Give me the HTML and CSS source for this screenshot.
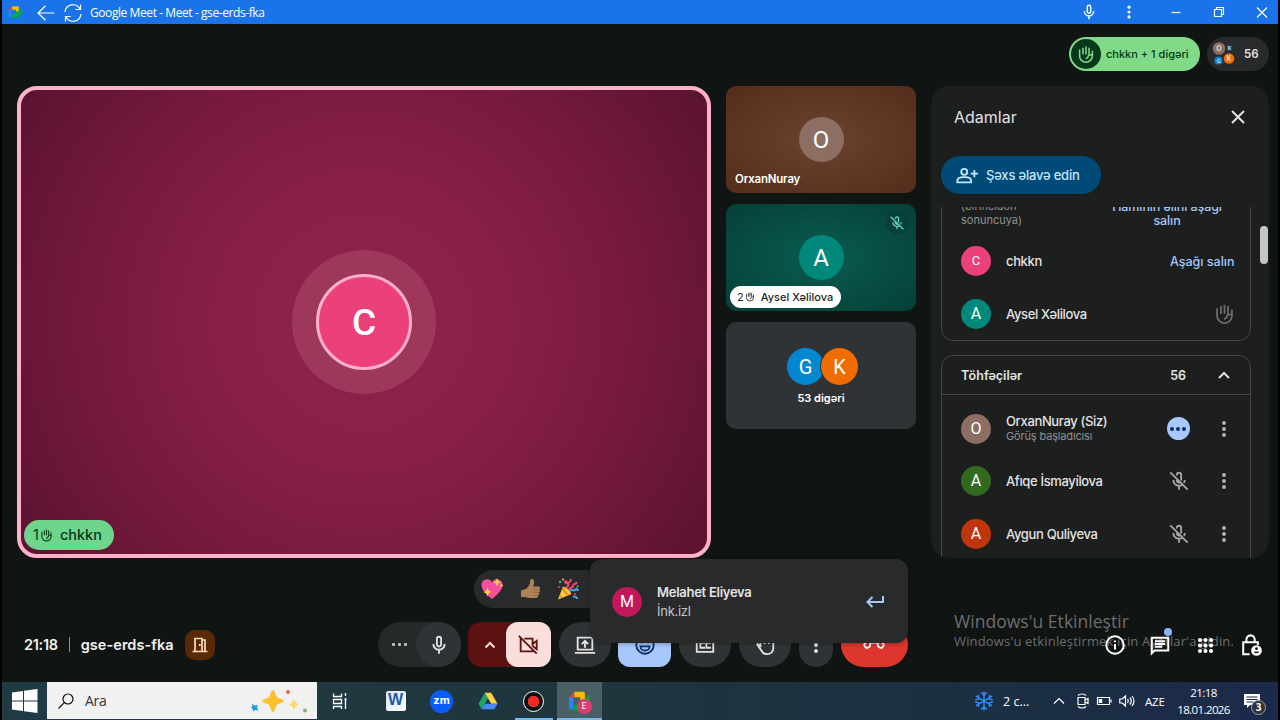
FILE: index.html
```html
<!DOCTYPE html>
<html lang="az">
<head>
    <meta charset="UTF-8">
    <title>Google Meet - Meet - gse-erds-fka</title>
    <link rel="stylesheet" href="styles.css">
</head>
<body>
    <!-- shared icons -->
    <svg class="defs">
        <symbol id="hand" viewBox="0 0 24 24">
            <path d="M3.500 6v8.500a8.500 8.500 0 0 0 17 0V7.500M8 12.500V3.500M12 12.500V2M16 12.500V3.500M20 13c-4-.3-5.500 1-5.500 3.500l-3 2"/>
        </symbol>
        <symbol id="mic" viewBox="0 0 24 24">
            <path d="M12 3a2.300 2.300 0 0 0-2.300 2.300v6a2.300 2.300 0 0 0 4.600 0v-6A2.300 2.300 0 0 0 12 3zM5.800 11a6.200 6.200 0 0 0 12.400 0M12 17.200V21.500"/>
        </symbol>
        <symbol id="micoff" viewBox="0 0 24 24">
            <path d="M9.700 6V5.300a2.300 2.300 0 0 1 4.600 0v6.200M9.700 9.500v2a2.300 2.300 0 0 0 3.200 2M5.800 11a6.200 6.200 0 0 0 9.800 5M18.200 11a6 6 0 0 1-.8 3M12 17.200V21.500M2.500 2.500l19 19"/>
        </symbol>
        <symbol id="dots" viewBox="0 0 24 24">
            <circle cx="12" cy="5.500" r="2.100"/><circle cx="12" cy="12" r="2.100"/><circle cx="12" cy="18.500" r="2.100"/>
        </symbol>
        <symbol id="meet" viewBox="0 0 24 24">
            <path fill="#2684fc" d="M1 8v13h5V8z"/>
            <path fill="#ea4335" d="M7 2L1 8h6z"/>
            <path fill="#ffba00" d="M7 2h9.500a2 2 0 0 1 2 2v8l-5-1V8H7z"/>
            <path fill="#00ac47" d="M6 16h7.500v-4l5-2 5-5v14l-5-4v5a2 2 0 0 1-2 2H6z"/>
        </symbol>
    </svg>

    <div class="screen">
        <div class="titlebar">
            <svg class="logo"><use href="#meet"/></svg>
            <svg class="back" viewBox="0 0 18 16"><path d="M17.500 8H1M8.500.8L1 8l7.500 7.200"/></svg>
            <svg class="reload" viewBox="0 0 18 18"><path d="M1 8A8 8 0 0 1 16 5M17 10A8 8 0 0 1 2 13M16.500 .5V5.500H11.500M1.500 17.500V12.500H6.500"/></svg>
            <span class="title">Google Meet - Meet - gse-erds-fka</span>
            <div class="winBtns">
                <svg class="line"><use href="#mic"/></svg>
                <svg class="solid"><use href="#dots"/></svg>
                <svg viewBox="0 0 18 18"><path d="M4.500 9.500h9"/></svg>
                <svg viewBox="0 0 18 18"><path d="M4.500 6.500h7v7h-7zM6.500 6.500v-2h7v7h-2"/></svg>
                <svg viewBox="0 0 18 18"><path d="M4 4.500l10 10M14 4.500L4 14.500"/></svg>
            </div>
        </div>

        <div class="meet">
            <div class="topbar">
                <div class="raised">
                    <span class="raisedIcon"><svg><use href="#hand"/></svg></span>
                    <span>chkkn + 1 digəri</span>
                </div>
                <div class="people">
                    <svg viewBox="0 0 24 24">
                        <circle cx="7" cy="6.500" r="6.300" fill="#8d6e63"/>
                        <circle cx="17.500" cy="6" r="3" fill="#0b4a80"/>
                        <circle cx="6.500" cy="18.500" r="4" fill="#0288d1"/>
                        <circle cx="17" cy="16.500" r="5.300" fill="#ef6c00"/>
                        <text x="7" y="9">O</text>
                        <text x="17.500" y="8" class="tiny">K</text>
                        <text x="6.500" y="20.500" class="tiny">G</text>
                        <text x="17" y="19">K</text>
                    </svg>
                    <span>56</span>
                </div>
            </div>

            <div class="stage">
                <div class="mainTile">
                    <div class="halo"><div class="bigAvatar">C</div></div>
                    <div class="tag green"><span>1</span><svg><use href="#hand"/></svg><b>chkkn</b></div>
                </div>
                <div class="tiles">
                    <div class="tile brown">
                        <div class="avatar">O</div>
                        <span class="name">OrxanNuray</span>
                    </div>
                    <div class="tile teal">
                        <div class="avatar">A</div>
                        <span class="muted"><svg><use href="#micoff"/></svg></span>
                        <div class="tag white"><span>2</span><svg><use href="#hand"/></svg><b>Aysel Xəlilova</b></div>
                    </div>
                    <div class="tile others">
                        <div class="pair"><span class="g">G</span><span class="k">K</span></div>
                        <span class="count">53 digəri</span>
                    </div>
                </div>
                <div class="panel">
                    <div class="panelHead">
                        <h2>Adamlar</h2>
                        <svg viewBox="0 0 16 16"><path d="M2 2l12 12M14 2L2 14"/></svg>
                    </div>
                    <button class="addBtn">
                        <svg viewBox="0 0 24 18"><circle cx="9" cy="5" r="3.300"/><path d="M1.500 16.500v-2c0-2.500 4-3.700 7.500-3.700s7.500 1.200 7.500 3.700v2zM20 3v8M16 7h8"/></svg>
                        <span>Şəxs əlavə edin</span>
                    </button>
                    <div class="list">
                        <div class="card first">
                            <div class="order">
                                <span>(birincidən<br>sonuncuya)</span>
                                <a>Hamının əlini aşağı<br>salın</a>
                            </div>
                            <div class="row">
                                <span class="dot pink">C</span>
                                <div class="who">chkkn</div>
                                <a>Aşağı salın</a>
                            </div>
                            <div class="row">
                                <span class="dot tealBg">A</span>
                                <div class="who">Aysel Xəlilova</div>
                                <svg class="handIcon"><use href="#hand"/></svg>
                            </div>
                        </div>
                        <div class="card last">
                            <div class="cardHead">
                                <span>Töhfəçilər</span>
                                <span class="num">56</span>
                                <svg viewBox="0 0 14 14"><path d="M2 10l5-5 5 5"/></svg>
                            </div>
                            <div class="row">
                                <span class="dot brownBg">O</span>
                                <div class="who">OrxanNuray (Siz)<small>Görüş başladıcısı</small></div>
                                <span class="talk"><i></i><i></i><i></i></span>
                                <svg class="more"><use href="#dots"/></svg>
                            </div>
                            <div class="row">
                                <span class="dot greenBg">A</span>
                                <div class="who">Afıqe İsmayílova</div>
                                <svg class="off"><use href="#micoff"/></svg>
                                <svg class="more"><use href="#dots"/></svg>
                            </div>
                            <div class="row">
                                <span class="dot redBg">A</span>
                                <div class="who">Aygun Quliyeva</div>
                                <svg class="off"><use href="#micoff"/></svg>
                                <svg class="more"><use href="#dots"/></svg>
                            </div>
                        </div>
                    </div>
                    <div class="thumb"></div>
                </div>
            </div>

            <div class="reactions">
                <svg viewBox="0 0 22 22">
                    <path fill="#f2509b" d="M11 21C5 16 .5 12 .5 7A5.500 5.500 0 0 1 11 4.500 5.500 5.500 0 0 1 21.500 7c0 5-4.500 9-10.500 14z"/>
                    <path fill="#ffd23f" d="M16 0l1.200 3L20 4.200l-2.800 1.200L16 8.500l-1.200-3.100L12 4.200 14.800 3zM6.500 9.500l1.200 3.300 3 1.200-3 1.200-1.200 3.300-1.200-3.300-3-1.200 3-1.200z"/>
                    <circle cx="20.500" cy="7.500" r="1.200" fill="#ffd23f"/>
                </svg>
                <svg viewBox="0 0 22 22">
                    <path fill="#ae8257" d="M2 12.500l5-1.500c3-2.500 4-5 4.200-8.500.2-2.500 3.800-2 3.900.8.100 2-.4 3.700-1 5.200h5.300c2 0 2.300 2.600.6 3 1.600.5 1.300 2.800-.3 3 1 .8.600 2.600-.8 2.800.5 1.400-.3 2.700-2 2.700H10c-1.500 0-3-1-4-1H2z"/>
                    <path fill="none" stroke="#85603f" stroke-width=".7" d="M14.500 11.800h5M14.500 14.600h5M14 17.400h4.500"/>
                </svg>
                <svg viewBox="0 0 22 22">
                    <path fill="#ffc83d" d="M1 21.500L6 8.500c4 1 7 4 8.500 7.500z"/>
                    <path fill="#e09a20" d="M3 16.500l3.500 3-2 .8-2.400-2zM6 9l6 8-2 .8L4.700 12z"/>
                    <path fill="none" stroke="#ef4a6b" stroke-width="2" d="M9 10c3-2 3-4 1-6s-3 0-1 1 5-1 5-4M12 12c1-4 4-1 4-4s3-1 4-4"/>
                    <path fill="none" stroke="#3fa9f5" stroke-width="2" d="M13 13c2-3 3 1 5-1s3 0 3 1M16 19c2-1 4 0 4 2"/>
                    <circle cx="3" cy="4" r="1.200" fill="#3fa9f5"/><circle cx="6" cy="1.500" r="1" fill="#ffc83d"/>
                    <circle cx="2" cy="9" r="1" fill="#ef4a6b"/><circle cx="20.500" cy="8.500" r="1" fill="#7ac943"/>
                    <circle cx="18" cy="16" r="1.100" fill="#ef4a6b"/>
                </svg>
            </div>

            <div class="bottom">
                <div class="info">
                    <span>21:18</span><i></i><span class="code">gse-erds-fka</span>
                    <div class="door"><svg viewBox="0 0 16 16"><path d="M.5 14.500h15M3 14V1.500h7V14M10 3h3v11.500M7.800 7v2"/></svg></div>
                </div>
                <div class="controls">
                    <div class="micGroup">
                        <span class="hdots"><i></i><i></i><i></i></span>
                        <div class="round"><svg><use href="#mic"/></svg></div>
                    </div>
                    <div class="camGroup">
                        <svg class="caret" viewBox="0 0 12 12"><path d="M1.500 8.500L6 4l4.500 4.500"/></svg>
                        <div class="cam"><svg viewBox="0 0 24 24"><path d="M8 5h9v8M5 5.500H4V19h13v-1.500M17 11l4.500-3.500v9L17 13M2 2l19.500 19.500"/></svg></div>
                    </div>
                    <div class="btn w52"><svg viewBox="0 0 24 24"><path d="M4 4h16v13H4zM1 20.500h22M12 15V7.500M8.500 11L12 7.500l3.500 3.500"/></svg></div>
                    <div class="btn w53 blue"><svg viewBox="0 0 24 24"><circle cx="12" cy="12" r="9.500"/><path d="M7 13.500h10a5 4.500 0 0 1-10 0zM8.500 8v2M15.500 8v2"/></svg></div>
                    <div class="btn w52"><svg viewBox="0 0 24 24"><path d="M3 5h18v14.500H3zM11 10.500V9.500H7V15h4v-1M17.500 10.500V9.500h-4V15h4v-1"/></svg></div>
                    <div class="btn w52"><svg viewBox="0 0 24 24"><path d="M7 14V5M3 11l6.500 9c1 1.300 2.500 2 4.500 2 4.500 0 7-3 7-6.500V7M3 10.500l5 3.500M11.500 11V3M16.300 11V4.500"/></svg></div>
                    <div class="btn w34"><svg class="fill"><use href="#dots"/></svg></div>
                    <div class="btn w68 red"><svg viewBox="0 0 24 24"><path d="M2 13.500c-1-1.500-.5-3 1-4 5-4 13-4 18 0 1.500 1 2 2.500 1 4L20 15.500c-1.500-.3-2.700-1.200-3.700-2.300V10c-2.800-1-5.800-1-8.600 0v3.200c-1 1.100-2.200 2-3.700 2.300z"/></svg></div>
                </div>
            </div>

            <div class="watermark">
                <p>Windows'u Etkinleştir</p>
                <span>Windows'u etkinleştirmek için Ayarlar'a gidin.</span>
            </div>
            <div class="tools">
                <svg viewBox="0 0 24 24"><circle cx="12" cy="12" r="9.500"/><path d="M12 11v6M12 7v2"/></svg>
                <div class="chat">
                    <svg viewBox="0 0 24 24"><path d="M3 21V4h18v14H6zM6.500 8h11M6.500 11h11M6.500 14h8"/></svg>
                </div>
                <svg class="fill" viewBox="0 0 24 24"><circle cx="5" cy="5" r="2.600"/><circle cx="12" cy="5" r="2.600"/><circle cx="19" cy="5" r="2.600"/><circle cx="5" cy="12" r="2.600"/><circle cx="12" cy="12" r="2.600"/><circle cx="19" cy="12" r="2.600"/><circle cx="5" cy="19" r="2.600"/><circle cx="12" cy="19" r="2.600"/><circle cx="19" cy="19" r="2.600"/></svg>
                <svg viewBox="0 0 24 24"><path d="M10.500 22H3.500V9h16v3M7 9V6a4.500 4.500 0 0 1 9 0v3"/><circle cx="18" cy="18" r="5.800" fill="#fff" stroke="none"/><circle cx="18" cy="16" r="1.500" fill="#101413" stroke="none"/><path d="M15.500 20h5" stroke="#101413" stroke-width="1.500"/></svg>
            </div>
            <div class="toast">
                <span class="dot magenta">M</span>
                <div class="msg">Melahet Eliyeva<small>İnk.izl</small></div>
                <svg viewBox="0 0 20 14"><path d="M18 1v6H2.500M7.500 2L2.500 7l5 5"/></svg>
            </div>
        </div>

        <div class="taskbar">
            <div class="start"><svg viewBox="0 0 26 24"><path d="M0 3.500l11-1.600v9.600H0zM12 1.800L25.500 0v11.500H12zM0 12.500h11v9.600L0 20.500zM12 12.500h13.500V24L12 22.200z"/></svg></div>
            <div class="search">
                <svg class="glass" viewBox="0 0 16 16"><circle cx="10" cy="6" r="5"/><path d="M6.300 9.700L.5 15.500"/></svg>
                <span>Ara</span>
                <svg class="sparkle" viewBox="0 0 58 24">
                    <path fill="#fbc02d" d="M23 1c2 0 2.500 6 4.500 7.500S34 10.500 34 12s-4.500 2-6.500 3.500S25 23 23 23s-2.500-6-4.500-7.500S12 13.500 12 12s4.500-2 6.500-3.500S21 1 23 1z"/>
                    <path fill="#fdd663" d="M44 10l1.700 3.600L49 15.500l-3.300 1.700L44 21l-1.700-3.800-3.500-1.700 3.500-1.900z"/>
                    <path fill="#1e9be0" d="M2 15l3 1.500L7.500 16l-.5 3 1.500 2.500-3-.5L3 22.500 2.800 20 .5 18.500l2-.8z"/>
                    <circle cx="38" cy="3" r="2" fill="#e06a3c"/><circle cx="55" cy="21.500" r="2" fill="#7cb860"/>
                </svg>
            </div>
            <div class="apps">
                <div class="app"><svg viewBox="0 0 20 20"><path class="thin" d="M3.500 2.500v3h8v-3M3.500 8.500h8v4h-8zM3.500 18v-2.500h8V18M15.500 2v3M15.500 7v11M14.500 8.500h2"/></svg></div>
                <div class="app word"><span>W</span></div>
                <div class="app zoom"><span>zm</span></div>
                <div class="app"><svg viewBox="0 0 22 20"><path fill="#1fa463" d="M7.500 1L.5 13l3.500 6L11 7z"/><path fill="#ffcf48" d="M7.500 1h7l7 12h-7z"/><path fill="#4688f4" d="M4 19h14l3.500-6h-14z"/></svg></div>
                <div class="app rec"><span></span></div>
                <div class="app active"><svg viewBox="0 0 24 24"><use href="#meet"/></svg><b>E</b></div>
            </div>
            <div class="tray">
                <svg class="snow" viewBox="0 0 20 20"><path d="M10 .5v19M1.800 5.200l16.400 9.600M18.200 5.200L1.800 14.800M7 1.500l3 3 3-3M7 18.500l3-3 3 3M1.200 9l4-1-1-4M18.800 11l-4 1 1 4M18.800 9l-4-1 1-4M1.200 11l4 1-1 4"/></svg>
                <span class="temp">2 c...</span>
                <svg viewBox="0 0 16 16"><path d="M3 10.500l5-5 5 5"/></svg>
                <svg viewBox="0 0 16 16"><path d="M4 4.500h7v7H4zM11 7l3-1.500v5L11 9M4 2.500c2-2 6-2 8 0M4 13.500c2 2 6 2 8 0"/></svg>
                <svg viewBox="0 0 16 16"><path d="M1.500 4.500h12v7h-12zM15 6.500v3"/><path d="M4.500 6v4" stroke-width="3.500"/></svg>
                <svg viewBox="0 0 16 16"><path d="M.8 6h2.500L6.500 3v10L3.300 10H.8zM8.500 6q1.500 2 0 4M10.800 4.500q3 3.500 0 7M13 3q4 5 0 10"/></svg>
                <span class="lang">AZE</span>
                <div class="clock">21:18<br>18.01.2026</div>
                <div class="note">
                    <svg viewBox="0 0 16 16"><path fill="#fff" stroke="none" d="M0 1h16v11H6l-3 3v-3H0z"/><path stroke="#1b2c48" d="M2.500 4h11M2.500 6.500h11M2.500 9h7"/></svg>
                    <b>3</b>
                </div>
            </div>
        </div>
    </div>
</body>
</html>
```

FILE: styles.css
```css
*{
    margin: 0;
    padding: 0;
    box-sizing: border-box;
}
body{
    background-color: #000;
    font-family: Inter, "Noto Sans", sans-serif;
    color: #e3e3e3;
    overflow: hidden;
}
svg{
    flex: none;
    fill: none;
    stroke: currentColor;
    stroke-width: 2;
}
.defs{
    display: none;
}
#dots, #meet{
    stroke: none;
}
#dots{
    fill: currentColor;
}
.screen{
    width: 1276px;
    height: 720px;
    margin-left: 2px;
    display: flex;
    flex-direction: column;
}

/* title bar */
.titlebar{
    height: 24px;
    background-color: #1a73e8;
    display: flex;
    align-items: center;
    color: #fff;
}
.titlebar svg{
    stroke-width: 1.2;
}
.titlebar .logo{
    width: 14px;
    height: 14px;
    margin-left: 6px;
}
.titlebar .back{
    width: 18px;
    height: 16px;
    margin: 1px 0 0 15px;
}
.titlebar .reload{
    width: 18px;
    height: 18px;
    margin: 1px 0 0 9px;
}
.titlebar .title{
    margin-left: 8px;
    font: 12px "Open Sans", sans-serif;
    letter-spacing: -0.42px;
}
.winBtns{
    margin-left: auto;
    margin-right: 7px;
    display: flex;
}
.winBtns svg{
    width: 18px;
    height: 18px;
    margin-left: 25px;
    stroke-width: 1.2;
}
.winBtns .line{
    stroke-width: 2;
}
.winBtns .line + svg{
    margin-left: 22px;
}
.winBtns .solid + svg{
    margin-left: 29px;
}

/* meeting */
.meet{
    position: relative;
    height: 658px;
    background-color: #101413;
}
.topbar{
    height: 62px;
    padding: 13px 9px 0 0;
    display: flex;
    justify-content: flex-end;
    gap: 7px;
    font-size: 11.5px;
    font-weight: 600;
}
.raised{
    width: 131px;
    height: 34px;
    border-radius: 17px;
    background-color: #80da88;
    color: #0a3818;
    padding-left: 2px;
    display: flex;
    align-items: center;
    gap: 5px;
    font-size: 11px;
    font-weight: 500;
    white-space: nowrap;
}
.raisedIcon{
    width: 30px;
    height: 30px;
    border-radius: 50%;
    background-color: #04381a;
    color: #80da88;
    display: flex;
    align-items: center;
    justify-content: center;
}
.raisedIcon svg{
    width: 18px;
    height: 18px;
}
.people{
    width: 62px;
    height: 34px;
    border-radius: 17px;
    background-color: #282a2c;
    padding-left: 5px;
    display: flex;
    align-items: center;
    gap: 8px;
}
.people svg{
    width: 24px;
    height: 24px;
    stroke: none;
}
.people text{
    fill: #e3e3e3;
    font-size: 7px;
    text-anchor: middle;
}
.people .tiny{
    font-size: 5px;
}
.stage{
    height: 472px;
    padding-left: 15px;
    display: flex;
    gap: 15px;
}
.mainTile{
    position: relative;
    width: 694px;
    border: 4px solid #ffb1c8;
    border-radius: 20px;
    background: radial-gradient(circle farthest-corner, #8e214a 0%, #8a204a 30%, #7a1a40 60%, #5a1231 100%);
    display: flex;
    align-items: center;
    justify-content: center;
}
.halo{
    width: 144px;
    height: 144px;
    border-radius: 50%;
    background-color: #9d375b;
    display: flex;
    align-items: center;
    justify-content: center;
}
.bigAvatar{
    width: 96px;
    height: 96px;
    border: 3px solid #ffb1c8;
    border-radius: 50%;
    background-color: #ec407a;
    color: #fff;
    font: 500 37px/92px Roboto, sans-serif;
    text-align: center;
}
/* name label over the tile corner */
.tag{
    position: absolute;
    display: flex;
    align-items: center;
}
.tag b{
    font-weight: 500;
}
.green{
    left: 3px;
    bottom: 4px;
    width: 90px;
    height: 30px;
    border-radius: 16px;
    background-color: #6dd58c;
    color: #0a3818;
    padding-left: 9px;
    padding-bottom: 1px;
    font-size: 14.5px;
}
.green svg{
    width: 13px;
    height: 14px;
    margin-left: 1px;
    margin-right: 7px;
}
.white{
    left: 4px;
    bottom: 3px;
    width: 111px;
    height: 22px;
    border-radius: 11px;
    background-color: #fff;
    color: #1f1f1f;
    padding-left: 7px;
    font-size: 11px;
    white-space: nowrap;
}
.white svg{
    width: 10px;
    height: 11px;
    margin-left: 1px;
    margin-right: 6px;
}
.tiles{
    width: 190px;
    display: flex;
    flex-direction: column;
    gap: 11.5px;
}
.tile{
    position: relative;
    height: 106.5px;
    border-radius: 10px;
    display: flex;
    flex-direction: column;
    align-items: center;
    justify-content: center;
}
.brown{
    background: radial-gradient(ellipse, #6b4330, #532d1b);
}
.teal{
    background: radial-gradient(ellipse, #0a5c50, #053f38);
}
.others{
    background-color: #303335;
}
.avatar{
    width: 45px;
    height: 45px;
    margin-top: 1px;
    border-radius: 50%;
    background-color: #8d6e63;
    color: #fff;
    font: 24px/46px Roboto, sans-serif;
    text-align: center;
}
.teal .avatar{
    background-color: #00897b;
}
.tile .name{
    position: absolute;
    left: 9px;
    bottom: 7px;
    font-size: 11.5px;
    font-weight: 600;
    letter-spacing: -0.2px;
    color: #fff;
}
.muted{
    position: absolute;
    top: 8px;
    right: 8px;
    width: 22px;
    height: 22px;
    border-radius: 50%;
    background-color: #093f39;
    color: #5fd0ba;
    display: flex;
    align-items: center;
    justify-content: center;
}
.muted svg{
    width: 16px;
    height: 16px;
}
.pair{
    display: flex;
    margin: 2px 0 0 3px;
}
.pair span{
    width: 37px;
    height: 37px;
    border-radius: 50%;
    font: 20px/38px Roboto, sans-serif;
    color: #fff;
    text-align: center;
}
.pair .g{
    background-color: #0288d1;
}
.pair .k{
    background-color: #ef6c00;
    margin-left: -3px;
    box-shadow: 0 0 0 1px #303335;
}
.count{
    margin-top: 6px;
    font-size: 11px;
    font-weight: 600;
    color: #fff;
}

/* people panel */
.panel{
    position: relative;
    width: 338px;
    border-radius: 18px;
    background-color: #1c1f1e;
    padding: 0 18px 0 10px;
    overflow: hidden;
}
.panelHead{
    height: 62px;
    padding: 0 5px 0 13px;
    display: flex;
    align-items: center;
    justify-content: space-between;
}
.panelHead h2{
    font-size: 16px;
    font-weight: 400;
}
.panelHead svg{
    width: 16px;
    height: 16px;
}
.addBtn{
    margin-top: 8px;
    width: 160px;
    height: 38px;
    border: none;
    border-radius: 19px;
    background-color: #004a77;
    color: #c2e7ff;
    padding-left: 15px;
    display: flex;
    align-items: center;
    gap: 8px;
    font: 500 13px Inter, sans-serif;
    letter-spacing: -0.2px;
    white-space: nowrap;
}
.addBtn svg{
    width: 22px;
    height: 17px;
}
.list{
    height: 351px;
    margin-top: 13px;
    overflow: hidden;
}
.list a{
    color: #a8c7fa;
    font-weight: 500;
}
.card{
    border: 1px solid #444746;
    border-radius: 12px;
    margin-bottom: 14px;
}
.first{
    margin-top: -33px;
}
.last{
    padding-bottom: 30px;
}
.order{
    height: 60px;
    padding: 0 18px 8px 19px;
    display: flex;
    align-items: flex-end;
    justify-content: space-between;
    font-size: 11px;
    line-height: 13.5px;
    color: #8e918f;
}
.order a{
    font-size: 12.5px;
    width: 130px;
    letter-spacing: -0.1px;
    text-align: center;
    white-space: nowrap;
}
.row{
    height: 52.5px;
    padding: 0 15.5px 0 19px;
    display: flex;
    align-items: center;
    font-size: 13px;
    font-weight: 500;
}
.row a{
    font-size: 12.5px;
}
.dot{
    flex: none;
    width: 30px;
    height: 30px;
    border-radius: 50%;
    color: #fff;
    font: 16px/30px Roboto, sans-serif;
    text-align: center;
}
.pink{
    background-color: #ec407a;
    font-size: 13px;
}
.tealBg{
    background-color: #00897b;
}
.brownBg{
    background-color: #8d6e63;
}
.greenBg{
    background-color: #33691e;
}
.redBg{
    background-color: #bf360c;
}
.magenta{
    background-color: #c2185b;
}
.who{
    flex: 1;
    margin-left: 15px;
    letter-spacing: -0.35px;
    white-space: nowrap;
}
.who small{
    display: block;
    font-size: 11px;
    font-weight: 400;
    line-height: 15px;
    letter-spacing: -0.15px;
    color: #8e918f;
}
.handIcon{
    width: 21px;
    height: 23px;
    color: #6c6f6e;
}
.more{
    width: 22px;
    height: 22px;
    margin-left: 23px;
    color: #b4b7b6;
}
.off{
    width: 22px;
    height: 22px;
    color: #a5a8a7;
}
.talk{
    width: 23px;
    height: 23px;
    border-radius: 50%;
    background-color: #a8c7fa;
    display: flex;
    align-items: center;
    justify-content: center;
    gap: 2px;
}
.talk i{
    width: 4px;
    height: 4px;
    border-radius: 50%;
    background-color: #062e6f;
}
.cardHead{
    height: 39px;
    margin-bottom: 7.5px;
    border-bottom: 1px solid #444746;
    padding: 0 19px;
    display: flex;
    align-items: center;
    font-size: 12.5px;
    font-weight: 600;
}
.cardHead .num{
    margin-left: auto;
    margin-right: 31px;
}
.cardHead svg{
    width: 14px;
    height: 14px;
}
.thumb{
    position: absolute;
    top: 140px;
    right: 1px;
    width: 8px;
    height: 38px;
    border-radius: 4px;
    background-color: #c4c7c5;
}

/* bottom bar */
.reactions{
    width: 338px;
    height: 37.5px;
    margin: 12px 0 0 472px;
    border-radius: 19px;
    background-color: #282a2c;
    padding-left: 7px;
    display: flex;
    align-items: center;
    gap: 16px;
}
.reactions svg{
    width: 22px;
    height: 22px;
    stroke: none;
}
.bottom{
    height: 45px;
    margin-top: 14.5px;
    display: flex;
    align-items: center;
}
.info{
    width: 376px;
    padding-left: 22px;
    display: flex;
    align-items: center;
    font-size: 14.5px;
    font-weight: 600;
    letter-spacing: -0.3px;
    color: #f1f3f2;
}
.info i{
    width: 1px;
    height: 15px;
    margin: 0 11px 0 11px;
    background-color: #8e918f;
}
.info .code{
    width: 93px;
    letter-spacing: 0.05px;
    white-space: nowrap;
}
.door{
    width: 30px;
    height: 30px;
    margin-left: 11px;
    border-radius: 10px;
    background-color: #5a2a06;
    color: #ffdcc1;
    display: flex;
    align-items: center;
    justify-content: center;
}
.door svg{
    width: 16px;
    height: 16px;
    stroke-width: 1.7;
}
.controls{
    display: flex;
    gap: 7.8px;
}
.micGroup, .camGroup, .btn, .round, .cam{
    height: 45px;
    display: flex;
    align-items: center;
    justify-content: center;
}
.micGroup{
    width: 83px;
    border-radius: 23px;
    background-color: #25292a;
    justify-content: space-between;
    padding-left: 14px;
}
.hdots{
    display: flex;
    gap: 3.5px;
}
.hdots i{
    width: 2.5px;
    height: 2.5px;
    border-radius: 50%;
    background-color: #c4c7c5;
}
.round{
    width: 45px;
    border-radius: 50%;
    background-color: #303335;
}
.controls svg{
    width: 22px;
    height: 22px;
}
.camGroup{
    width: 83px;
    margin-left: -1px;
    border-radius: 13px;
    background-color: #5c1210;
    justify-content: space-between;
    padding-left: 16px;
}
.camGroup .caret{
    width: 12px;
    height: 12px;
    color: #f9dedc;
}
.cam{
    width: 45px;
    border-radius: 12px;
    background-color: #f9dedc;
    color: #601410;
}
.btn{
    border-radius: 23px;
    background-color: #303335;
}
.btn .fill{
    fill: currentColor;
    stroke: none;
}
.w34{
    width: 34px;
}
.w52{
    width: 52px;
}
.w53{
    width: 53px;
}
.w68{
    width: 67px;
}
.blue{
    border-radius: 12px;
    background-color: #a8c7fa;
    color: #062e6f;
}
.red{
    background-color: #dc362e;
    color: #fff;
}
/* icons stay above the activation text */
.tools{
    position: absolute;
    right: 16px;
    bottom: 26px;
    display: flex;
    align-items: center;
    gap: 23px;
    color: #fff;
}
.tools svg{
    display: block;
    width: 22px;
    height: 22px;
    stroke-width: 2.2;
}
.tools .fill{
    width: 19px;
    height: 19px;
    margin: 0 2px;
    fill: currentColor;
    stroke: none;
}
.chat{
    position: relative;
}
.chat::after{
    content: "";
    position: absolute;
    top: -6px;
    right: -1px;
    width: 8px;
    height: 8px;
    border-radius: 50%;
    background-color: #8ab4f8;
}
.watermark{
    position: absolute;
    left: 952px;
    top: 585px;
    font-family: "Open Sans", sans-serif;
    color: rgba(190,190,190,0.55);
    white-space: nowrap;
}
.watermark p{
    font-size: 17.5px;
    line-height: 24px;
    letter-spacing: 0.03px;
}
.watermark span{
    display: block;
    font-size: 13px;
    line-height: 17px;
    letter-spacing: 0.16px;
}
.toast{
    position: absolute;
    left: 588px;
    top: 535px;
    width: 318px;
    height: 84px;
    border-radius: 12px;
    background-color: #282a2c;
    box-shadow: 0 1px 4px rgba(0,0,0,0.3);
    padding: 2px 23px 0 22px;
    display: flex;
    align-items: center;
}
.toast .msg{
    flex: 1;
    margin-left: 15px;
    font-size: 13px;
    font-weight: 600;
    line-height: 18px;
    letter-spacing: -0.27px;
}
.toast small{
    display: block;
    font-size: 13px;
    font-weight: 400;
    line-height: 20px;
    color: #c4c7c5;
}
.toast svg{
    width: 20px;
    height: 14px;
    color: #a8c7fa;
}

/* windows taskbar */
.taskbar{
    height: 38px;
    background: linear-gradient(90deg, #1f3b43, #20353d 45%, #1c2f42 75%, #1b2a4a);
    display: flex;
    font-family: "Open Sans", sans-serif;
    color: #fff;
}
.start{
    width: 45px;
    padding: 7px 0 0 10px;
}
.start svg{
    width: 26px;
    height: 24px;
    fill: #fff;
    stroke: none;
}
.search{
    width: 270px;
    height: 37px;
    background-color: #f1f1f1;
    color: #333;
    padding-left: 11px;
    display: flex;
    align-items: center;
    font-size: 14px;
    letter-spacing: -0.3px;
}
.search .glass{
    width: 16px;
    height: 16px;
    margin-right: 11px;
    stroke: #111;
    stroke-width: 1.2;
}
.search .sparkle{
    width: 58px;
    height: 24px;
    margin-left: auto;
    margin-right: 9px;
    stroke: none;
}
.apps{
    display: flex;
}
.app{
    position: relative;
    width: 46px;
    display: flex;
    align-items: center;
    justify-content: center;
}
.app:first-child{
    margin-right: 9.5px;
}
.app svg{
    width: 20px;
    height: 20px;
    stroke: none;
}
.app .thin{
    stroke: #fff;
    stroke-width: 1.3;
}
.word span{
    width: 20px;
    height: 20px;
    background: linear-gradient(135deg, #d5e5f7, #fff);
    border-radius: 2px;
    color: #1d5aa8;
    font: bold 16px/17px "Liberation Sans", sans-serif;
    text-align: center;
}
.zoom span{
    width: 23px;
    height: 23px;
    border-radius: 50%;
    background-color: #0b5cff;
    font: bold 11px/21px Inter, sans-serif;
    text-align: center;
}
.rec span{
    width: 21px;
    height: 21px;
    border-radius: 50%;
    border: 1.5px solid #fff;
    background: radial-gradient(#ef2b22 0 5.5px, #111 6px);
}
.rec::after, .active::after{
    content: "";
    position: absolute;
    left: 4px;
    right: 4px;
    bottom: 0;
    height: 2px;
    background-color: #76b9ed;
}
.active{
    width: 45px;
    background-color: #4a6066;
}
.active::after{
    left: 0;
    right: 0;
}
.active svg{
    width: 22px;
    height: 22px;
}
.active b{
    position: absolute;
    left: 20px;
    top: 17px;
    width: 15px;
    height: 15px;
    border-radius: 50%;
    background-color: #e03a70;
    font: 9px/15px Roboto, sans-serif;
    text-align: center;
}
.tray{
    margin-left: auto;
    margin-right: 10px;
    display: flex;
    align-items: center;
    font-size: 12.5px;
}
.tray svg{
    width: 16px;
    height: 16px;
    margin-right: 6.5px;
    stroke-width: 1.2;
}
.tray .snow{
    width: 20px;
    height: 20px;
    margin-right: 9px;
    color: #2f8bef;
    stroke-width: 1.5;
}
.temp{
    width: 48px;
}
.lang{
    width: 31px;
    margin-left: 4px;
    font-size: 11.5px;
    letter-spacing: -0.2px;
}
.clock{
    width: 55px;
    font-size: 11.5px;
    line-height: 17px;
    letter-spacing: -0.6px;
    text-align: center;
    white-space: nowrap;
}
.note{
    position: relative;
    width: 24px;
    margin-left: 13px;
}
.note svg{
    display: block;
    margin: 0;
}
.note b{
    position: absolute;
    left: 7px;
    top: 7px;
    width: 15px;
    height: 15px;
    border: 1px solid #9aa0a6;
    border-radius: 50%;
    background-color: #2c3238;
    font-size: 10px;
    line-height: 13px;
    text-align: center;
}
```
